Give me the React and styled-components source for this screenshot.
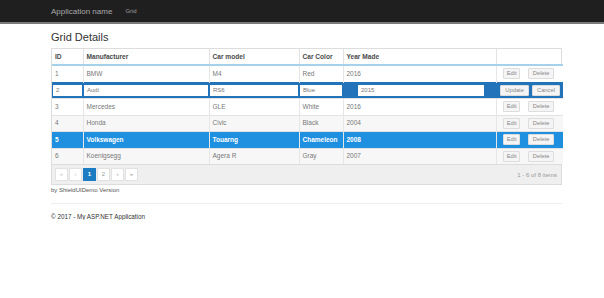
import React from 'react'
import styled, { createGlobalStyle } from 'styled-components'

const GlobalStyle = createGlobalStyle`
  body {
    margin: 0;
    background: #fff;
    font-family: "Liberation Sans", Arial, sans-serif;
    color: #333;
  }
`

const Navbar = styled.div`
  height: 22px;
  background: #1f1f1f;
  border-bottom: 2px solid #7a7a7a;
  display: flex;
  align-items: center;
  padding-left: 51px;
  gap: 13px;
`

const Brand = styled.span`
  font-size: 8px;
  color: #a8a8a8;
`

const NavLink = styled.span`
  font-size: 6px;
  color: #9d9d9d;
`

const Container = styled.div`
  margin-left: 51px;
  width: 511px;
`

const Title = styled.h2`
  margin: 6px 0 4px;
  font-size: 11px;
  font-weight: normal;
  line-height: 14px;
  color: #333;
`

const GridBox = styled.div`
  border: 1px solid #ddd;
`

const Table = styled.table`
  width: 100%;
  border-collapse: collapse;
  table-layout: fixed;
`

const Th = styled.th`
  height: 15px;
  padding: 0 3px;
  text-align: left;
  font-size: 6.6px;
  line-height: 8px;
  font-weight: bold;
  color: #4a4a4a;
  border-left: 1px solid #e3e3e3;
  border-bottom: 2px solid #a6d1ea;
  &:first-child { border-left: none; }
`

const Tr = styled.tr`
  background: ${p => (p.$selected ? '#1f8fe0' : p.$alt ? '#f7f7f7' : '#fff')};
  color: ${p => (p.$selected ? '#fff' : '#777')};
  font-weight: ${p => (p.$selected ? 'bold' : 'normal')};
`

const Td = styled.td`
  height: 15.5px;
  padding: 0 3px;
  font-size: 6.5px;
  line-height: 8px;
  border-left: 1px solid #e6e6e6;
  border-top: 1px solid #e2e2e2;
  white-space: nowrap;
  &:first-child { border-left: none; }
`

const ActionCell = styled(Td)`
  text-align: right;
  padding-right: 9px;
`

const EditCell = styled.td`
  height: 11px;
  padding: 2px 1px;
  background: #2273b9;
  border-top: 1px solid #2273b9;
  line-height: 8px;
  text-align: ${p => (p.$right ? 'right' : 'left')};
  padding-left: ${p => p.$indent || 1}px;
  padding-right: ${p => p.$padRight || 1}px;
`

const Input = styled.div`
  height: 11.5px;
  background: #fff;
  font-size: 6px;
  color: #777;
  line-height: 11.5px;
  padding-left: 3px;
`

const Btn = styled.span`
  display: inline-block;
  vertical-align: middle;
  margin-left: ${p => p.$gap ?? 3}px;
  padding: 0 ${p => p.$pad ?? 3.5}px;
  height: 9px;
  line-height: 9px;
  font-size: 5.8px;
  font-weight: normal;
  color: #888;
  background: #f5f5f5;
  border: 1px solid #ddd;
  border-radius: 1px;
`

const Pager = styled.div`
  display: flex;
  align-items: center;
  justify-content: space-between;
  height: 19px;
  padding: 0 3px;
  background: #efefef;
  border-top: 1px solid #ddd;
`

const PagerGroup = styled.div`
  display: flex;
`

const PageBtn = styled.span`
  width: 11px;
  height: 11px;
  line-height: 11px;
  text-align: center;
  font-size: 6px;
  font-weight: ${p => (p.$active ? 'bold' : 'normal')};
  color: ${p => (p.$active ? '#fff' : p.$disabled ? '#c8c8c8' : '#999')};
  background: ${p => (p.$active ? '#1c7cc2' : '#fff')};
  border: 1px solid ${p => (p.$active ? '#1c7cc2' : '#e2e2e2')};
  margin-left: 1px;
  &:first-child { margin-left: 0; }
`

const PagerInfo = styled.span`
  font-size: 6px;
  color: #999;
  padding-right: 1px;
`

const Credit = styled.div`
  margin-top: 2px;
  font-size: 6px;
  color: #555;
`

const Rule = styled.hr`
  margin: 10px 0 0;
  border: none;
  border-top: 1px solid #eee;
`

const Footer = styled.div`
  margin-top: 9px;
  font-size: 6.3px;
  color: #333;
`

const columns = [
  { title: 'ID', width: 31 },
  { title: 'Manufacturer', width: 126 },
  { title: 'Car model', width: 90 },
  { title: 'Car Color', width: 44 },
  { title: 'Year Made', width: 153 },
  { title: '', width: 67 }
]

const rows = [
  { id: 1, make: 'BMW', model: 'M4', color: 'Red', year: 2016 },
  { id: 2, make: 'Audi', model: 'RS6', color: 'Blue', year: 2015, editing: true },
  { id: 3, make: 'Mercedes', model: 'GLE', color: 'White', year: 2016 },
  { id: 4, make: 'Honda', model: 'Civic', color: 'Black', year: 2004 },
  { id: 5, make: 'Volkswagen', model: 'Touarng', color: 'Chameleon', year: 2008, selected: true },
  { id: 6, make: 'Koenigsegg', model: 'Agera R', color: 'Gray', year: 2007 }
]

const App = () => (
  <>
    <GlobalStyle />
    <Navbar>
      <Brand>Application name</Brand>
      <NavLink>Grid</NavLink>
    </Navbar>
    <Container>
      <Title>Grid Details</Title>
      <GridBox>
        <Table>
          <colgroup>
            {columns.map((c, i) => <col key={i} style={{ width: c.width }} />)}
          </colgroup>
          <thead>
            <tr>
              {columns.map((c, i) => <Th key={i}>{c.title}</Th>)}
            </tr>
          </thead>
          <tbody>
            {rows.map((r, i) =>
              r.editing ? (
                <tr key={r.id}>
                  <EditCell><Input>{r.id}</Input></EditCell>
                  <EditCell><Input>{r.make}</Input></EditCell>
                  <EditCell><Input>{r.model}</Input></EditCell>
                  <EditCell><Input>{r.color}</Input></EditCell>
                  <EditCell $indent={15} $padRight={12}><Input>{r.year}</Input></EditCell>
                  <EditCell $right $padRight={3}>
                    <Btn $pad={4}>Update</Btn>
                    <Btn $pad={4}>Cancel</Btn>
                  </EditCell>
                </tr>
              ) : (
                <Tr key={r.id} $alt={i % 2 === 1} $selected={r.selected}>
                  <Td>{r.id}</Td>
                  <Td>{r.make}</Td>
                  <Td>{r.model}</Td>
                  <Td>{r.color}</Td>
                  <Td>{r.year}</Td>
                  <ActionCell>
                    <Btn $pad={2.5}>Edit</Btn>
                    <Btn $gap={8}>Delete</Btn>
                  </ActionCell>
                </Tr>
              )
            )}
          </tbody>
        </Table>
        <Pager>
          <PagerGroup>
            <PageBtn $disabled>«</PageBtn>
            <PageBtn $disabled>‹</PageBtn>
            <PageBtn $active>1</PageBtn>
            <PageBtn>2</PageBtn>
            <PageBtn>›</PageBtn>
            <PageBtn>»</PageBtn>
          </PagerGroup>
          <PagerInfo>1 - 6 of 8 items</PagerInfo>
        </Pager>
      </GridBox>
      <Credit>by ShieldUIDemo Version</Credit>
      <Rule />
      <Footer>© 2017 - My ASP.NET Application</Footer>
    </Container>
  </>
)

export default App
